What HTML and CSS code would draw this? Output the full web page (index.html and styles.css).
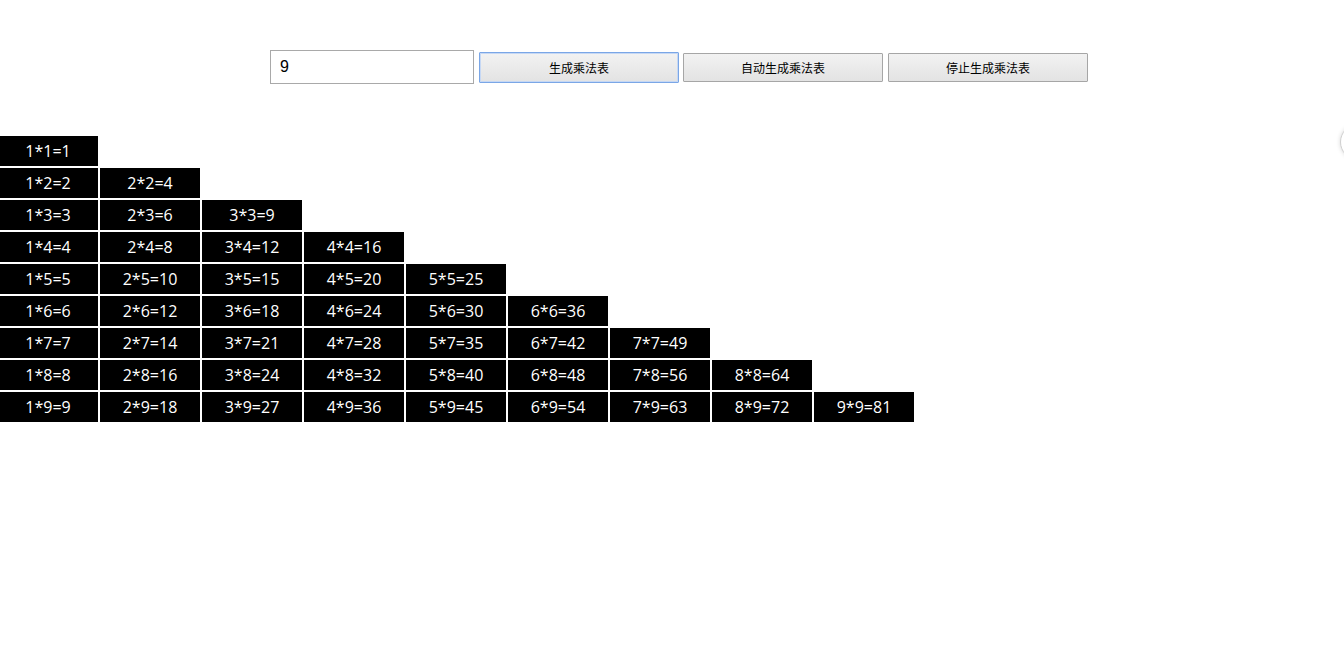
FILE: index.html
```html
<!DOCTYPE html>
<html>
<head>
<meta charset="utf-8">
<link rel="stylesheet" href="styles.css">
</head>
<body>
<div class="controls">
  <input class="num" type="text" value="9">
  <button class="btn focus">生成乘法表</button>
  <button class="btn">自动生成乘法表</button>
  <button class="btn">停止生成乘法表</button>
</div>
<div class="table" id="table"></div>
<div class="edge-ball"></div>
<script>
var t = document.getElementById('table');
for (var i = 1; i <= 9; i++) {
  var row = document.createElement('div');
  row.className = 'row';
  for (var j = 1; j <= i; j++) {
    var c = document.createElement('div');
    c.className = 'cell';
    c.textContent = j + '*' + i + '=' + (i * j);
    row.appendChild(c);
  }
  t.appendChild(row);
}
</script>
</body>
</html>
```
FILE: styles.css
```css
html, body {
  margin: 0;
  padding: 0;
  background: #fff;
  overflow: hidden;
}
body {
  font-family: "Open Sans", "Noto Sans", sans-serif;
  width: 1344px;
  height: 664px;
  position: relative;
}
.controls {
  display: flex;
  align-items: center;
  padding-top: 50px;
  padding-left: 270px;
  height: 34px;
}
.num {
  box-sizing: border-box;
  width: 204px;
  height: 34px;
  border: 1px solid #a9a9a9;
  padding: 0 9px;
  font-family: "Liberation Sans", Arial, sans-serif;
  font-size: 16px;
  color: #000;
  outline: none;
  margin: 0 5px 0 0;
}
.btn {
  box-sizing: border-box;
  width: 200px;
  height: 29px;
  border: 1px solid #a6a6a6;
  border-radius: 1px;
  background: linear-gradient(#f2f2f2, #e3e3e3);
  font-family: "Noto Sans CJK SC", sans-serif;
  font-size: 12px;
  color: #000;
  margin: 0 4px 0 0;
  padding: 0;
}
.btn.focus {
  height: 31px;
  border: 1px solid #7aa6e6;
  box-shadow: inset 0 0 0 1px #c6d8f4;
}
.btn:last-child {
  margin-left: 1px;
}
.table {
  margin-top: 52px;
  display: flex;
  flex-direction: column;
  gap: 2px;
}
.row {
  display: flex;
  gap: 2px;
  margin-left: -2px;
}
.cell {
  width: 100px;
  height: 30px;
  background: #000;
  color: #fff;
  font-size: 16px;
  font-weight: 500;
  line-height: 30px;
  text-align: center;
}
.edge-ball {
  position: absolute;
  left: 1340px;
  top: 124px;
  width: 34px;
  height: 34px;
  border-radius: 50%;
  background: #fff;
  border: 1px solid #d0d0d0;
  box-shadow: 0 0 4px rgba(0,0,0,0.15);
}
```
